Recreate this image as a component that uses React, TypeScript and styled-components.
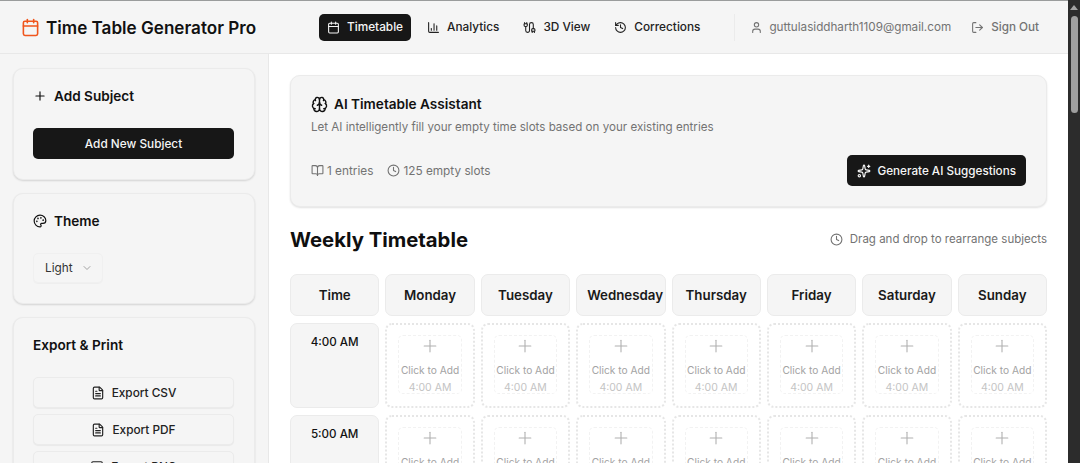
import React from "react";
import styled, { createGlobalStyle } from "styled-components";
import { Calendar, ChartColumn, Cable, History, User, LogOut, Plus, Palette, ChevronDown, FileText, Image, Brain, BookOpen, Clock, Sparkles } from "lucide-react";

const Global = createGlobalStyle`
  html, body { margin: 0; padding: 0; height: 463px; overflow: hidden; background: #fff; }
  body { font-family: Inter, "Liberation Sans", sans-serif; color: #111; }
  * { box-sizing: border-box; }
`;
const Shell = styled.div`display: flex; height: 463px; overflow: hidden;`;
const Page = styled.div`flex: 1; min-width: 0; display: flex; flex-direction: column; border-top: 1px solid #9a9c9c;`;
const Scrollbar = styled.div`
  width: 12px; flex: none; background: #2c2c2c; display: flex; flex-direction: column; align-items: center; padding-top: 5px; gap: 6px;
`;
const ArrowUp = styled.div`width: 0; height: 0; border-left: 4px solid transparent; border-right: 4px solid transparent; border-bottom: 5px solid #a3a3a3;`;
const Thumb = styled.div`width: 7px; height: 97px; border-radius: 4px; background: #9f9f9f;`;
const Header = styled.header`
  height: 53px; flex: none; display: flex; align-items: center; background: #f5f5f5; border-bottom: 1px solid #e8e8e8; padding: 0 29px 0 21px;
`;
const Brand = styled.div`display: flex; align-items: center; gap: 6px; font-size: 17.1px; font-weight: 600; width: 298px; color: #111; white-space: nowrap; svg { color: #f0561d; flex: none; }`;
const Nav = styled.nav`display: flex; gap: 8px; align-items: center;`;
const NavItem = styled.div<{ $active?: boolean }>`
  height: 27px; display: flex; align-items: center; gap: 7px; border-radius: 5px; padding: 0 8px; font-size: 11.8px; font-weight: 500; white-space: nowrap;
  color: ${p => (p.$active ? "#f5f5f5" : "#222")}; background: ${p => (p.$active ? "#171717" : "transparent")};
  svg { flex: none; }
`;
const UserArea = styled.div`
  margin-left: auto; height: 27px; border-left: 1px solid #ebebeb; padding-left: 15px; display: flex; align-items: center; color: #737373; font-size: 11.7px; gap: 6px; white-space: nowrap;
  svg { flex: none; }
`;
const SignOut = styled.div`display: flex; align-items: center; gap: 7px; margin-left: 14px; font-weight: 500;`;
const Body = styled.div`flex: 1; min-height: 0; display: flex;`;
const Sidebar = styled.aside`
  width: 269px; flex: none; background: #f5f5f5; border-right: 1px solid #e8e8e8; padding: 14px 13px 0 13px; display: flex; flex-direction: column; gap: 13px; overflow: hidden;
`;
const SideCard = styled.section`
  flex: none; border: 1px solid #ebebeb; border-radius: 10px; background: #f5f5f5; padding: 19px 20px 20px 19px; box-shadow: 0 1px 2px rgba(0,0,0,.14);
`;
const SideTitle = styled.h2`margin: 0; display: flex; align-items: center; gap: 7px; font-size: 13.6px; font-weight: 600; line-height: 16px;`;
const PrimaryButton = styled.div`
  height: 31px; margin-top: 24px; border-radius: 5px; background: #171717; color: #f5f5f5; font-size: 11.8px; font-weight: 500;
  display: flex; align-items: center; justify-content: center;
`;
const Select = styled.div`
  width: 70px; height: 30px; margin-top: 24px; border: 1px solid #f0f0f0; border-radius: 5px; display: flex; align-items: center; gap: 8px; padding-left: 11px; font-size: 11.8px; color: #333;
  box-shadow: 0 1px 1px rgba(0,0,0,.03); svg { color: #a3a3a3; }
`;
const ExportList = styled.div`display: flex; flex-direction: column; gap: 6px; margin-top: 24px;`;
const ExportButton = styled.div`
  height: 31px; border: 1px solid #ebebeb; border-radius: 5px; background: #f5f5f5; display: flex; align-items: center; justify-content: center; gap: 7px; font-size: 11.8px; font-weight: 500; color: #222;
  box-shadow: 0 1px 1px rgba(0,0,0,.05);
`;
const Main = styled.main`flex: 1; min-width: 0; background: #fff; padding: 21px 21px 0 21px; overflow: hidden;`;
const Assistant = styled.section`
  height: 132px; border: 1px solid #ebebeb; border-radius: 10px; background: #f5f5f5; padding: 20px 20px 0; box-shadow: 0 1px 2px rgba(0,0,0,.12);
`;
const AssistantTitle = styled.h2`margin: 0; display: flex; gap: 6px; align-items: center; font-size: 13.6px; font-weight: 600; line-height: 17px;`;
const Sub = styled.p`margin: 6px 0 0; font-size: 11.6px; line-height: 16px; color: #737373;`;
const StatsRow = styled.div`display: flex; align-items: center; justify-content: space-between; margin-top: 20px;`;
const Stats = styled.div`display: flex; gap: 14px;`;
const Stat = styled.span`display: flex; align-items: center; gap: 3px; font-size: 11.8px; color: #737373;`;
const GenerateButton = styled.div`
  height: 31px; padding: 0 10px; border-radius: 5px; background: #171717; color: #f5f5f5; display: flex; align-items: center; gap: 6px; font-size: 11.7px; font-weight: 500;
`;
const TitleRow = styled.div`display: flex; align-items: center; justify-content: space-between; margin-top: 19px; height: 26px;`;
const H1 = styled.h1`margin: 0; font-size: 20.3px; font-weight: 700; color: #0f0f0f;`;
const Hint = styled.div`display: flex; align-items: center; gap: 7px; font-size: 11.5px; line-height: 28px; color: #737373;`;
const Grid = styled.div`display: grid; grid-template-columns: repeat(8, minmax(0, 1fr)); grid-auto-rows: auto; gap: 7px 6px; margin-top: 22px;`;
const HeadCell = styled.div`
  height: 42px; border: 1px solid #ebebeb; border-radius: 7px; background: #f5f5f5; padding: 0 10px; text-align: center; line-height: 40px; font-size: 13.3px; font-weight: 600; white-space: nowrap; color: #1a1a1a;
`;
const TimeCell = styled.div`
  height: 85px; border: 1px solid #ebebeb; border-radius: 7px; background: #f5f5f5; text-align: center; padding-top: 10px; font-size: 11.6px; line-height: 16px; font-weight: 500; color: #111;
`;
const Slot = styled.div`
  height: 85px; border: 2px dotted #e6e6e6; border-radius: 7px; padding: 10px 11px; background: #fff;
`;
const SlotInner = styled.div`
  height: 59px; border: 1px dashed #f2f2f2; border-radius: 5px; display: flex; flex-direction: column; align-items: center; color: #a8a8a8; white-space: nowrap;
  svg { color: #b0b0b0; flex: none; }
`;
const SlotLabel = styled.div`font-size: 10.2px; line-height: 14px; margin-top: 7px; font-weight: 400; color: #a3a3a3;`;
const SlotTime = styled.div`font-size: 10.5px; line-height: 14px; margin-top: 4px; color: #c4c4c4;`;

const days = ["Monday", "Tuesday", "Wednesday", "Thursday", "Friday", "Saturday", "Sunday"];
const times = ["4:00 AM", "5:00 AM"];

export default function App() {
  return (
    <Shell>
      <Global />
      <Page>
        <Header>
          <Brand><Calendar size={19} strokeWidth={2} />Time Table Generator Pro</Brand>
          <Nav>
            <NavItem $active><Calendar size={13} />Timetable</NavItem>
            <NavItem><ChartColumn size={13} />Analytics</NavItem>
            <NavItem><Cable size={13} />3D View</NavItem>
            <NavItem><History size={13} />Corrections</NavItem>
          </Nav>
          <UserArea>
            <User size={13} />guttulasiddharth1109@gmail.com
            <SignOut><LogOut size={13} />Sign Out</SignOut>
          </UserArea>
        </Header>
        <Body>
          <Sidebar>
            <SideCard>
              <SideTitle><Plus size={14} />Add Subject</SideTitle>
              <PrimaryButton>Add New Subject</PrimaryButton>
            </SideCard>
            <SideCard>
              <SideTitle><Palette size={14} />Theme</SideTitle>
              <Select>Light<ChevronDown size={12} /></Select>
            </SideCard>
            <SideCard>
              <SideTitle>Export &amp; Print</SideTitle>
              <ExportList>
                <ExportButton><FileText size={14} />Export CSV</ExportButton>
                <ExportButton><FileText size={14} />Export PDF</ExportButton>
                <ExportButton><Image size={14} />Export PNG</ExportButton>
              </ExportList>
            </SideCard>
          </Sidebar>
          <Main>
            <Assistant>
              <AssistantTitle><Brain size={17} />AI Timetable Assistant</AssistantTitle>
              <Sub>Let AI intelligently fill your empty time slots based on your existing entries</Sub>
              <StatsRow>
                <Stats>
                  <Stat><BookOpen size={13} />1 entries</Stat>
                  <Stat><Clock size={13} />125 empty slots</Stat>
                </Stats>
                <GenerateButton><Sparkles size={14} />Generate AI Suggestions</GenerateButton>
              </StatsRow>
            </Assistant>
            <TitleRow>
              <H1>Weekly Timetable</H1>
              <Hint><Clock size={13} />Drag and drop to rearrange subjects</Hint>
            </TitleRow>
            <Grid>
              <HeadCell>Time</HeadCell>
              {days.map(d => <HeadCell key={d}>{d}</HeadCell>)}
              {times.map(t => (
                <React.Fragment key={t}>
                  <TimeCell>{t}</TimeCell>
                  {days.map(d => (
                    <Slot key={d}>
                      <SlotInner>
                        <Plus size={20} strokeWidth={1.3} />
                        <SlotLabel>Click to Add</SlotLabel>
                        <SlotTime>{t}</SlotTime>
                      </SlotInner>
                    </Slot>
                  ))}
                </React.Fragment>
              ))}
            </Grid>
          </Main>
        </Body>
      </Page>
      <Scrollbar><ArrowUp /><Thumb /></Scrollbar>
    </Shell>
  );
}
